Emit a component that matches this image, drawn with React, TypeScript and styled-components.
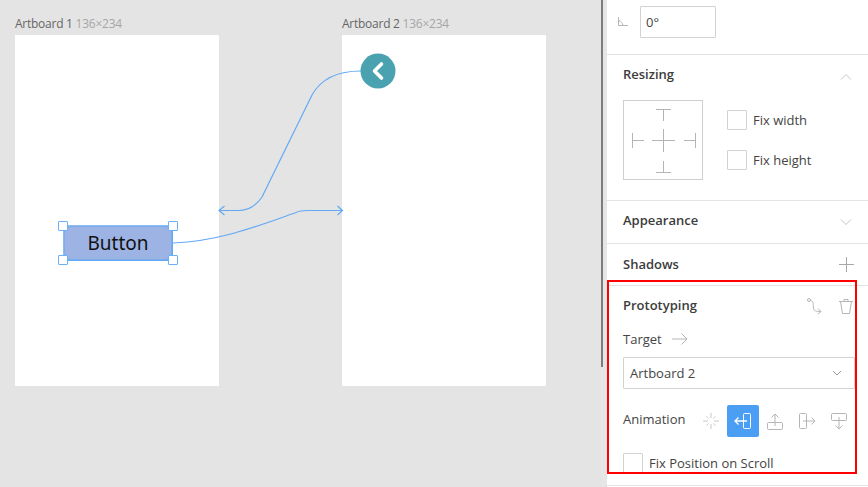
import React from "react";
import styled, { createGlobalStyle } from "styled-components";

const Global = createGlobalStyle`
  html, body { margin: 0; padding: 0; height: 100%; overflow: hidden; }
  body { font-family: "Open Sans", "Noto Sans", sans-serif; color: #333; background: #fff; }
`;

const Shell = styled.div`
  position: relative;
  display: flex;
  width: 868px;
  height: 487px;
  overflow: hidden;
`;

const Canvas = styled.div`
  position: relative;
  flex: 0 0 601px;
  background: #e4e4e4;
`;

const Gutter = styled.div`
  flex: 0 0 6px;
  background: #e6e6e6;
`;

const Thumb = styled.div`
  width: 2px;
  height: 367px;
  background: #7d7d7d;
`;

const BoardLabel = styled.div<{ $left: number }>`
  position: absolute;
  top: 16px;
  left: ${(p) => p.$left}px;
  font-size: 12px;
  line-height: 16px;
  color: #666;
  white-space: nowrap;
  letter-spacing: -0.25px;
  span { color: #a6a6a6; }
`;

const Board = styled.div<{ $left: number }>`
  position: absolute;
  top: 35px;
  left: ${(p) => p.$left}px;
  width: 204px;
  height: 351px;
  background: #fff;
`;

const ProtoButton = styled.div`
  position: absolute;
  left: 63px;
  top: 225px;
  box-sizing: border-box;
  width: 110px;
  height: 36px;
  display: flex;
  align-items: center;
  justify-content: center;
  background: #9db3e4;
  border: 2px solid #7fadec;
  border-radius: 9px;
  font-family: "Noto Sans", sans-serif;
  font-size: 19px;
  color: #111;
`;

const SelectionEdge = styled.div`
  position: absolute;
  left: 63px;
  top: 225px;
  box-sizing: border-box;
  width: 110px;
  height: 36px;
  border: 1px solid #5ea9f6;
  border-top-color: #8dbcf3;
  border-left-color: #8dbcf3;
`;

const Handle = styled.div<{ $x: number; $y: number }>`
  position: absolute;
  left: ${(p) => p.$x}px;
  top: ${(p) => p.$y}px;
  box-sizing: border-box;
  width: 10px;
  height: 10px;
  background: #fff;
  border: 1.5px solid #6cb0f5;
  border-radius: 1px;
`;

const Wires = styled.svg`
  position: absolute;
  inset: 0;
  pointer-events: none;
`;

const Panel = styled.div`
  flex: 0 0 261px;
  background: #fff;
  display: flex;
  flex-direction: column;
`;

const Section = styled.section<{ $h: number }>`
  box-sizing: border-box;
  height: ${(p) => p.$h}px;
  padding: 0 13px 0 16px;
  border-bottom: 1px solid #e3e3e3;
`;

const AngleRow = styled.div`
  display: flex;
  align-items: center;
  gap: 11px;
  padding-top: 6px;
  margin-left: -6px;
`;

const Field = styled.div`
  box-sizing: border-box;
  width: 76px;
  height: 32px;
  padding-left: 5px;
  border: 1px solid #d2d2d2;
  border-radius: 1px;
  font-size: 13px;
  line-height: 30px;
  color: #444;
`;

const Head = styled.div<{ $h?: number }>`
  display: flex;
  align-items: center;
  justify-content: space-between;
  height: ${(p) => p.$h ?? 42}px;
`;

const Title = styled.h3<{ $lift?: number }>`
  margin: 0 0 ${(p) => (p.$lift ?? 0) * 2}px;
  font-size: 13px;
  font-weight: 600;
  color: #3c3c3c;
`;

const HeadIcon = styled.span<{ $right?: number; $up?: number }>`
  display: flex;
  margin: 0 ${(p) => p.$right ?? 3}px ${(p) => (p.$up ?? 0) * 2}px 0;
`;

const ResizeBody = styled.div`
  display: flex;
  gap: 24px;
  margin-top: 2px;
`;

const Constraints = styled.div`
  box-sizing: border-box;
  width: 80px;
  height: 80px;
  border: 1px solid #cfcfcf;
`;

const Checks = styled.div`
  display: flex;
  flex-direction: column;
  gap: 20px;
  padding-top: 10px;
`;

const CheckRow = styled.label`
  display: flex;
  align-items: center;
  gap: 6px;
  font-size: 13px;
  color: #444;
`;

const Box = styled.span`
  box-sizing: border-box;
  width: 20px;
  height: 20px;
  border: 1px solid #d2d2d2;
  border-radius: 1px;
`;

const IconGroup = styled.div`
  display: flex;
  align-items: center;
  gap: 17px;
  margin-right: 2px;
`;

const TargetRow = styled.div`
  display: flex;
  align-items: center;
  gap: 10px;
  height: 20px;
  margin-top: 3px;
  font-size: 13px;
  color: #444;
`;

const SelectBox = styled.div`
  box-sizing: border-box;
  display: flex;
  align-items: center;
  justify-content: space-between;
  width: 232px;
  height: 32px;
  margin-top: 8px;
  padding: 0 12px 0 6px;
  border: 1px solid #d2d2d2;
  border-radius: 1px;
  font-size: 13px;
  color: #444;
`;

const AnimRow = styled.div`
  display: flex;
  align-items: center;
  margin-top: 16px;
  height: 32px;
  font-size: 13px;
  color: #444;
`;

const AnimLabel = styled.span`
  width: 72px;
  margin-bottom: 4px;
`;

const AnimIcon = styled.div<{ $active?: boolean }>`
  display: flex;
  align-items: center;
  justify-content: center;
  width: 32px;
  height: 32px;
  border-radius: 2px;
  background: ${(p) => (p.$active ? "#4a9ff5" : "transparent")};
`;

const ScrollCheck = styled(CheckRow)`
  margin-top: 16px;
`;

const RedFrame = styled.div`
  position: absolute;
  left: 607px;
  top: 280px;
  box-sizing: border-box;
  width: 250px;
  height: 194px;
  border: 2px solid #f00;
  pointer-events: none;
`;

const Ico = ({ w = 16, h = 16, c = "#b5b5b5", children }: { w?: number; h?: number; c?: string; children: React.ReactNode }) => (
  <svg width={w} height={h} viewBox={`0 0 ${w} ${h}`} fill="none" stroke={c} strokeWidth="1">
    {children}
  </svg>
);

export default function App() {
  return (
    <Shell>
      <Global />
      <Canvas>
        <BoardLabel $left={15}>Artboard 1 <span>136×234</span></BoardLabel>
        <BoardLabel $left={342}>Artboard 2 <span>136×234</span></BoardLabel>
        <Board $left={15} />
        <Board $left={342} />
        <ProtoButton>Button</ProtoButton>
        <SelectionEdge />
        <Handle $x={58} $y={221} />
        <Handle $x={168} $y={221} />
        <Handle $x={58} $y={255} />
        <Handle $x={168} $y={255} />
        <Wires width="601" height="487" viewBox="0 0 601 487" fill="none">
          <g stroke="#62a9f4" strokeWidth="1.2">
            <path d="M361 71 C340 71 322 77 312 95 L262 197 C256 206 248 210.5 238 210.5 L219 210.5" />
            <path d="M224.5 206 L219 210.5 L224.5 215" />
            <path d="M173 243 C220 241 258 226 296 212.5 C299 211 303 210.5 308 210.5 L342 210.5" />
            <path d="M337.5 206 L342.5 210.5 L337.5 215" />
          </g>
          <circle cx="378" cy="71" r="17.5" fill="#4aa1b0" />
          <path d="M381.5 64 L374.5 71 L381.5 78" stroke="#fff" strokeWidth="3.6" strokeLinecap="round" strokeLinejoin="round" />
        </Wires>
      </Canvas>
      <Gutter><Thumb /></Gutter>
      <Panel>
        <Section $h={55}>
          <AngleRow>
            <Ico w={12} h={10}>
              <path d="M1.5 0 V8.5 H11 M1.5 3.5 C4 4 5.5 6 6 8.5" />
            </Ico>
            <Field>0°</Field>
          </AngleRow>
        </Section>
        <Section $h={146}>
          <Head $h={43}>
            <Title $lift={3}>Resizing</Title>
            <HeadIcon>
              <Ico w={12} h={8} c="#c4c4c4"><path d="M1 6.5 L6 1.5 L11 6.5" /></Ico>
            </HeadIcon>
          </Head>
          <ResizeBody>
            <Constraints>
              <svg width="78" height="78" viewBox="0 0 78 78" fill="none" stroke="#b4b4b4" strokeWidth="1">
                <path d="M32 8.5 H47 M39.5 8.5 V20" />
                <path d="M32 71.5 H47 M39.5 60 V71.5" />
                <path d="M8.5 32 V47 M8.5 39.5 H20" />
                <path d="M71.5 32 V47 M60 39.5 H71.5" />
                <path d="M28 39.5 H51 M39.5 28 V51" />
              </svg>
            </Constraints>
            <Checks>
              <CheckRow><Box />Fix width</CheckRow>
              <CheckRow><Box />Fix height</CheckRow>
            </Checks>
          </ResizeBody>
        </Section>
        <Section $h={43}>
          <Head>
            <Title $lift={2}>Appearance</Title>
            <HeadIcon>
              <Ico w={12} h={8} c="#c4c4c4"><path d="M1 1.5 L6 6.5 L11 1.5" /></Ico>
            </HeadIcon>
          </Head>
        </Section>
        <Section $h={42}>
          <Head>
            <Title $lift={1}>Shadows</Title>
            <HeadIcon $right={1} $up={1}>
              <Ico w={15} h={15} c="#a8a8a8"><path d="M7.5 0 V15 M0 7.5 H15" /></Ico>
            </HeadIcon>
          </Head>
        </Section>
        <Section $h={200}>
          <Head $h={40}>
            <Title $lift={1}>Prototyping</Title>
            <IconGroup>
              <Ico w={15} h={16}>
                <circle cx="2" cy="2" r="1.5" />
                <path d="M3.5 2.5 C7 3 6 7 6.5 10 C7 13 9 13.5 14 13.5 M11 10.5 L14 13.5 L11 16" />
              </Ico>
              <Ico w={14} h={16}>
                <path d="M0 3.5 H14 M5 3.5 V1.5 H9 V3.5 M1.5 3.5 L3.5 15.5 H10.5 L12.5 3.5" />
              </Ico>
            </IconGroup>
          </Head>
          <TargetRow>
            Target
            <Ico w={16} h={12}><path d="M0 6 H15 M9.5 .5 L15 6 L9.5 11.5" /></Ico>
          </TargetRow>
          <SelectBox>
            Artboard 2
            <Ico w={10} h={7} c="#9a9a9a"><path d="M1 1 L5 5 L9 1" /></Ico>
          </SelectBox>
          <AnimRow>
            <AnimLabel>Animation</AnimLabel>
            <AnimIcon>
              <Ico w={16} h={16} c="#c8c8c8">
                <path d="M8 0 V5 M8 11 V16 M0 8 H5 M11 8 H16 M3.5 3.5 L5.5 5.5 M12.5 3.5 L10.5 5.5 M3.5 12.5 L5.5 10.5 M12.5 12.5 L10.5 10.5" />
              </Ico>
            </AnimIcon>
            <AnimIcon $active>
              <Ico w={18} h={18} c="#fff">
                <rect x="9.5" y="1.5" width="7" height="15" rx="1" />
                <path d="M1 9 H13 M4.5 5.5 L1 9 L4.5 12.5" strokeWidth="1.3" />
              </Ico>
            </AnimIcon>
            <AnimIcon>
              <Ico w={16} h={17}>
                <rect x=".5" y="9.5" width="15" height="7" rx="1" />
                <path d="M8 1 V13 M4.5 4.5 L8 1 L11.5 4.5" />
              </Ico>
            </AnimIcon>
            <AnimIcon>
              <Ico w={17} h={16}>
                <rect x=".5" y=".5" width="7" height="15" rx="1" />
                <path d="M4 8 H16 M12.5 4.5 L16 8 L12.5 11.5" />
              </Ico>
            </AnimIcon>
            <AnimIcon>
              <Ico w={16} h={17}>
                <rect x=".5" y=".5" width="15" height="7" rx="1" />
                <path d="M8 4 V16 M4.5 12.5 L8 16 L11.5 12.5" />
              </Ico>
            </AnimIcon>
          </AnimRow>
          <ScrollCheck><Box />Fix Position on Scroll</ScrollCheck>
        </Section>
      </Panel>
      <RedFrame />
    </Shell>
  );
}
